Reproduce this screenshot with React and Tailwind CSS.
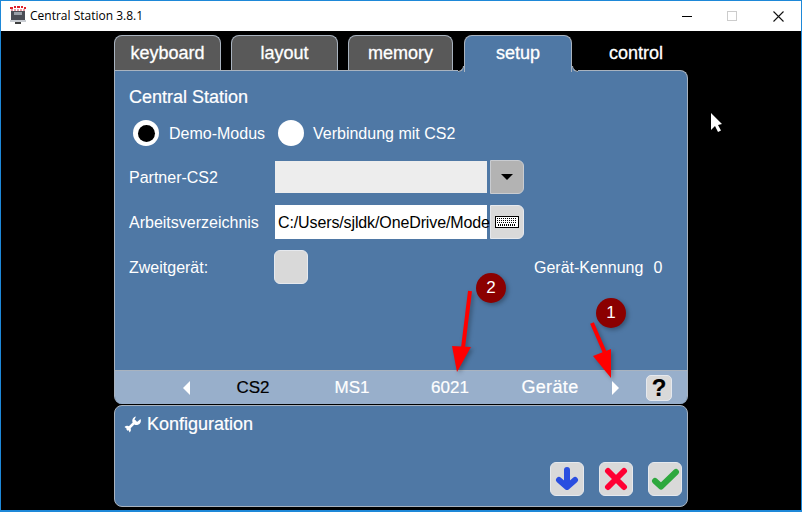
import React from "react";

const FONT = { fontFamily: '"Liberation Sans", Arial, sans-serif' };

function Tab({ label, className = "" }) {
  return (
    <div className={`h-[35px] shrink-0 rounded-t-[8px] border border-b-0 border-[#a9b3bf] bg-[#595959] text-white text-[18px] leading-[35px] text-center [-webkit-text-stroke:0.3px_white] ${className}`}>
      {label}
    </div>
  );
}

function SquareButton({ className = "", children }) {
  return (
    <div className={`flex h-[34px] w-[34px] items-center justify-center rounded-[6px] border border-[#e6e9ee] bg-[#d9d9d9] ${className}`}>
      {children}
    </div>
  );
}

function KeyboardIcon() {
  return (
    <svg width="24" height="12" viewBox="0 0 24 12">
      <rect x="0.5" y="0.5" width="23" height="11" fill="#fff" stroke="#000" />
      <path d="M2 2.5H22M2 4.5H22M2 6.5H22" stroke="#000" strokeWidth="1" strokeDasharray="1 1" />
      <path d="M3 9H21" stroke="#000" strokeWidth="2" strokeDasharray="1 1" />
    </svg>
  );
}

export default function App() {
  return (
    <div style={FONT} className="relative flex h-[512px] w-[802px] flex-col overflow-hidden border-x border-t border-b-2 border-[#1e88d8] bg-black">
      {/* title bar */}
      <div className="flex h-[30px] shrink-0 items-center bg-white">
        <svg width="18" height="20" viewBox="0 0 18 20" className="ml-[8px] mt-[-2px]">
          <path d="M1 3h3M5 2h2M8 2h3M12 2h2M15 3h2" stroke="#e0202a" strokeWidth="2" />
          <path d="M2 5h14" stroke="#d04050" strokeWidth="1" strokeDasharray="2 1" />
          <rect x="2" y="6" width="14" height="9" fill="#4a4d55" />
          <rect x="5" y="7" width="8" height="3" fill="#9aa0a8" />
          <rect x="1" y="15" width="16" height="2" fill="#c8ccd2" />
          <path d="M6 18h6" stroke="#000" strokeWidth="1.5" />
        </svg>
        <span className="ml-[3px] text-[12px] text-black" style={{ fontFamily: '"Open Sans", sans-serif' }}>Central Station 3.8.1</span>
        <div className="ml-auto mr-[17px] flex items-center">
          <div className="h-px w-[10px] bg-black" />
          <div className="ml-[35px] h-[10px] w-[10px] border border-[#cccccc]" />
          <svg width="11" height="11" viewBox="0 0 11 11" className="ml-[36px]">
            <path d="M0.5 0.5L10.5 10.5M10.5 0.5L0.5 10.5" stroke="#111" strokeWidth="1.1" />
          </svg>
        </div>
      </div>

      {/* main */}
      <div className="flex flex-1 flex-col pl-[113px] pt-[4px]">
        <div className="flex h-[35px] items-start">
          <Tab label="keyboard" className="w-[107px]" />
          <Tab label="layout" className="ml-[10px] w-[107px]" />
          <Tab label="memory" className="ml-[10px] w-[105px]" />
          <div className="relative z-10 ml-[11px] h-[37px] w-[108px] shrink-0 rounded-t-[8px] border border-b-0 border-[#a9b3bf] bg-[#4f78a5] text-center text-[18px] leading-[35px] text-white [-webkit-text-stroke:0.3px_white]">
            setup
            <span className="absolute bottom-[0px] left-[-7px] h-[6px] w-[6px] bg-[#4f78a5]">
              <span className="block h-[6px] w-[6px] rounded-br-[6px] border-b border-r border-[#a9b3bf] bg-black" />
            </span>
            <span className="absolute bottom-[0px] right-[-7px] h-[6px] w-[6px] bg-[#4f78a5]">
              <span className="block h-[6px] w-[6px] rounded-bl-[6px] border-b border-l border-[#a9b3bf] bg-black" />
            </span>
          </div>
          <div className="w-[128px] shrink-0 text-center text-[18px] leading-[37px] text-white [-webkit-text-stroke:0.3px_white]">control</div>
        </div>

        <div className="flex h-[334px] w-[574px] flex-col overflow-hidden rounded-b-[8px] rounded-tr-[8px] border border-b-0 border-[#a9b3bf] bg-[#4f78a5] text-[16px] text-white">
          <div className="ml-[14px] mt-[16px] h-[20px] text-[18px] leading-[20px] [-webkit-text-stroke:0.2px_white]">Central Station</div>

          <div className="mt-[13px] flex h-[26px] items-center pl-[18px]">
            <div className="flex h-[26px] w-[26px] items-center justify-center rounded-full bg-white">
              <div className="h-[17px] w-[17px] rounded-full bg-black" />
            </div>
            <span className="ml-[10px] w-[109px] pt-[2px]">Demo-Modus</span>
            <div className="h-[26px] w-[26px] rounded-full bg-white" />
            <span className="ml-[9px] pt-[2px]">Verbindung mit CS2</span>
          </div>

          <div className="mt-[14px] flex h-[34px] items-center pl-[14px]">
            <span className="w-[146px] pt-[2px]">Partner-CS2</span>
            <div className="h-[32px] w-[212px] bg-[#ededed]" />
            <div className="ml-[3px] flex h-[34px] w-[34px] items-center justify-center rounded-r-[6px] border border-[#c9ccd1] bg-[#b3b3b3]">
              <div className="h-0 w-0 border-x-[6px] border-t-[6px] border-x-transparent border-t-black" />
            </div>
          </div>

          <div className="mt-[11px] flex h-[34px] items-center pl-[14px]">
            <span className="w-[146px] whitespace-nowrap pt-[2px]">Arbeitsverzeichnis</span>
            <div className="h-[34px] w-[212px] whitespace-nowrap bg-white pl-[3px] pt-[1px] leading-[34px] tracking-[-0.12px] text-black">C:/Users/sjldk/OneDrive/Mode</div>
            <div className="ml-[3px] flex h-[34px] w-[34px] items-center justify-center rounded-r-[6px] border border-[#e6e9ee] bg-[#d9d9d9]">
              <KeyboardIcon />
            </div>
          </div>

          <div className="mt-[11px] flex h-[34px] items-center pl-[14px]">
            <span className="w-[145px] pt-[2px]">Zweitgerät:</span>
            <SquareButton />
            <span className="ml-[226px] whitespace-nowrap pt-[2px]">Gerät-Kennung</span>
            <span className="ml-[10px] pt-[2px]">0</span>
          </div>

          <div className="flex-1" />

          <div className="flex h-[34px] items-center border-t border-[#a9b3bf] bg-[#98afcb] text-[17px] [-webkit-text-stroke:0.2px_currentColor]">
            <div className="ml-[68px] h-0 w-0 border-y-[7px] border-r-[7px] border-y-transparent border-r-white" />
            <div className="ml-[14px] w-[98px] text-center text-black">CS2</div>
            <div className="ml-[1px] w-[98px] text-center">MS1</div>
            <div className="w-[98px] text-center">6021</div>
            <div className="ml-[1px] w-[100px] text-center text-[18px] tracking-[0.02em]">Geräte</div>
            <div className="ml-[12px] h-0 w-0 border-y-[7px] border-l-[7px] border-y-transparent border-l-white" />
            <div className="ml-[27px] flex h-[26px] w-[26px] items-center justify-center rounded-[5px] border border-[#e6e9ee] bg-[#d9d9d9] text-[24px] font-bold leading-none text-black">?</div>
          </div>
        </div>

        <div className="mt-[1px] flex h-[102px] w-[574px] flex-col rounded-[8px] border border-[#a9b3bf] bg-[#4f78a5] text-white">
          <div className="ml-[9px] mt-[8px] flex h-[20px] items-center">
            <svg width="17" height="17" viewBox="0 0 17 17">
              <path d="M3 14L12 5" stroke="#fff" strokeWidth="2.500" />
              <path d="M16.500 3A4.300 4.300 0 1 1 12 0.500L10.500 3.500L13 6Z" fill="#fff" />
              <path d="M0.500 11A3.500 3.500 0 1 1 5.500 16.500L4.500 13.500L2.500 12.500Z" fill="#fff" />
            </svg>
            <span className="ml-[6px] text-[18px] [-webkit-text-stroke:0.2px_white]">Konfiguration</span>
          </div>
          <div className="mr-[5px] mt-[28px] flex justify-end gap-[15px]">
            <SquareButton>
              <svg width="24" height="24" viewBox="0 0 24 24">
                <path d="M12 3V19M4 13L12 20L20 13" fill="none" stroke="#2a4ee0" strokeWidth="6" strokeLinecap="round" strokeLinejoin="round" />
              </svg>
            </SquareButton>
            <SquareButton>
              <svg width="24" height="24" viewBox="0 0 24 24">
                <path d="M4 4L20 20M20 4L4 20" stroke="#ff0033" strokeWidth="6" strokeLinecap="round" />
              </svg>
            </SquareButton>
            <SquareButton>
              <svg width="30" height="24" viewBox="0 0 30 24">
                <path d="M5 14L11 19.500L26 5" fill="none" stroke="#2ea83e" strokeWidth="6" strokeLinecap="round" strokeLinejoin="round" />
              </svg>
            </SquareButton>
          </div>
        </div>
      </div>

      {/* annotations lying over the page */}
      <svg width="802" height="512" viewBox="0 0 802 512" className="pointer-events-none absolute left-[-1px] top-[-1px] z-20">
        <g style={{ filter: "drop-shadow(2px 2px 2px rgba(0,0,0,0.3))" }}>
          <path d="M470 291L463 348" stroke="#ff0000" strokeWidth="4" />
          <path d="M452 346L471 347L457 372Z" fill="#ff0000" />
          <path d="M592 323L605 353" stroke="#ff0000" strokeWidth="4" />
          <path d="M593 356L611 349L611 378Z" fill="#ff0000" />
          <circle cx="491" cy="288" r="15" fill="#8b0000" />
          <circle cx="611" cy="313" r="15" fill="#8b0000" />
        </g>
        <path d="M711 113V130L715 126L718 132L721 130.500L718 125L722 124Z" fill="#fff" />
      </svg>
      <div className="absolute left-[474px] top-[277px] z-30 w-[32px] text-center text-[17px] leading-[20px] text-white">2</div>
      <div className="absolute left-[594px] top-[302px] z-30 w-[32px] text-center text-[17px] leading-[20px] text-white">1</div>
    </div>
  );
}
